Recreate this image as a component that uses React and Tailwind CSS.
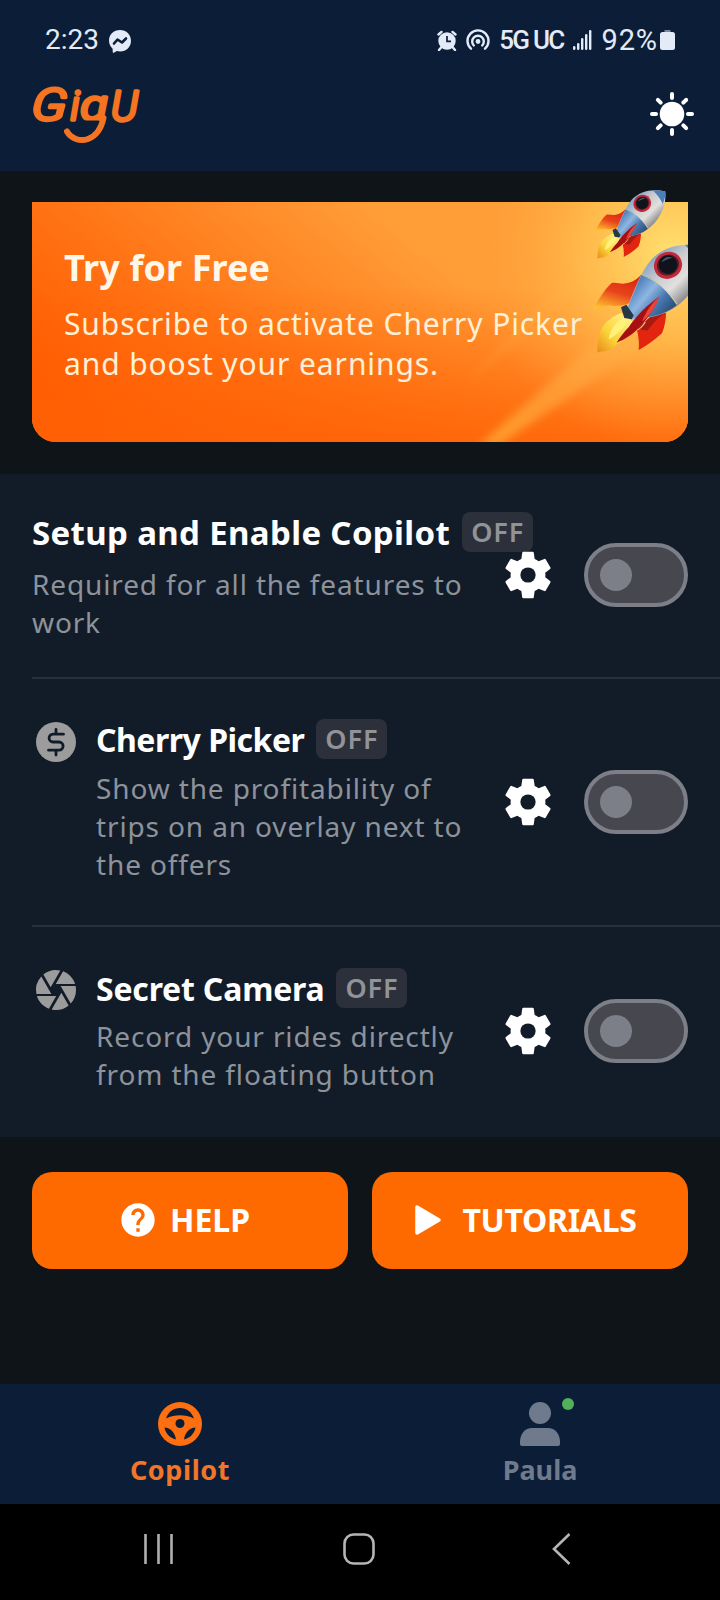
import { useState } from "react";
import { MdCamera, MdHelp } from "react-icons/md";
import clsx from "clsx";

function StatusBar() {
  return (
    <div className="flex h-20 items-center pl-[45px] pr-[45px] text-[#e3eaf8]">
      <span className="font-[Roboto] text-[28px] leading-8">2:23</span>
      <svg className="ml-[9px] mt-px" width="24" height="24" viewBox="0 0 24 24">
        <path
          fill="currentColor"
          d="M12 1C5.600 1 1 5.600 1 11.500c0 3.400 1.500 6.300 3.600 8.200l.2 3.700c.1.400.4.600.8.400l3.400-1.700c1 .2 2 .3 3 .3 6.400 0 11-4.600 11-10.700S18.400 1 12 1z"
        />
        <path
          d="M6 14.500l3.500-4 4.500 3 4-4"
          fill="none"
          stroke="#0c1e37"
          strokeWidth="2.600"
          strokeLinejoin="round"
          strokeLinecap="round"
        />
      </svg>
      <div className="ml-auto flex items-center">
        <svg width="20" height="21" viewBox="0 0 20 21" fill="none">
          <circle cx="10" cy="11" r="8.700" fill="currentColor" />
          <path
            d="M1.500 4.500l3-2.600M18.500 4.500l-3-2.600M4.500 17l-2.500 3M15.500 17l2.500 3"
            stroke="currentColor"
            strokeWidth="2.400"
            strokeLinecap="round"
          />
          <path d="M10 6v5.300h4" stroke="#0c1e37" strokeWidth="1.700" />
        </svg>
        <svg className="ml-[9px]" width="24" height="22" viewBox="0 0 24 22" fill="none">
          <g stroke="currentColor" strokeWidth="2.400" strokeLinecap="round">
            <path d="M5 19.700a10.500 10.500 0 1 1 14 0" />
            <path d="M7.800 16.500a5.800 5.800 0 1 1 8.400 0" />
          </g>
          <circle cx="12" cy="12.500" r="2.400" fill="currentColor" />
        </svg>
        <span className="ml-[9px] flex gap-[5px] font-[Roboto] text-[26px] font-medium leading-8 tracking-[-1.800px]">
          <span>5G</span>
          <span>UC</span>
        </span>
        <svg className="ml-[9px]" width="20" height="22" viewBox="0 0 20 22" fill="currentColor">
          <rect x="1" y="17" width="2.400" height="4" rx="1.200" />
          <rect x="5" y="14" width="2.400" height="7" rx="1.200" />
          <rect x="9" y="9" width="2.400" height="12" rx="1.200" />
          <rect x="13" y="5" width="2.400" height="16" rx="1.200" />
          <rect x="17" y="1" width="2.400" height="20" rx="1.200" />
        </svg>
        <span className="ml-[9px] font-[Roboto] text-[29px] leading-8 tracking-[0.900px]">92%</span>
        <svg className="ml-[2px]" width="15" height="22" viewBox="0 0 15 22">
          <path d="M4.500 1h6v3h-6z" fill="#7d899d" />
          <rect x="0" y="3" width="15" height="18" rx="2.500" fill="currentColor" />
        </svg>
      </div>
    </div>
  );
}

function Logo() {
  return (
    <svg className="-mt-4 overflow-visible" width="116" height="84" viewBox="0 -16 116 84" aria-label="GigU">
      <defs>
        <clipPath id="bowl">
          <path d="M40 0h50v40.500H40z" />
        </clipPath>
      </defs>
      <g
        fill="#f57421"
        stroke="#f57421"
        strokeWidth="3.600"
        strokeLinejoin="round"
        fontFamily="Roboto, sans-serif"
        fontStyle="italic"
        fontWeight="300"
      >
        <text transform="translate(-1 40) skewX(-4) scale(1.200 1)" fontSize="44">G</text>
        <text x="38.500" y="40" fontSize="41">i</text>
        <g clipPath="url(#bowl)">
          <text transform="translate(48.500 40) scale(1.200 1)" fontSize="42">g</text>
        </g>
        <text x="79" y="41" fontSize="42">U</text>
      </g>
      {/* Tail of the g doubles as a smile */}
      <path
        d="M35 51.500c4 7 13 10.500 21 7.500 8-3 13-9 15.500-21"
        fill="none"
        stroke="#f57421"
        strokeWidth="6"
        strokeLinecap="round"
      />
    </svg>
  );
}

function SunIcon() {
  return (
    <svg width="48" height="48" viewBox="0 0 48 48">
      <circle cx="24" cy="24" r="12.300" fill="#fff" />
      {[0, 45, 90, 135, 180, 225, 270, 315].map((angle) => (
        <path
          key={angle}
          d="M24 4v4"
          stroke="#fff"
          strokeWidth="4"
          strokeLinecap="round"
          transform={`rotate(${angle} 24 24)`}
        />
      ))}
    </svg>
  );
}

function Rocket() {
  return (
    <g>
      <path
        d="M185 398c-30 12-50 26-62 52-8 20-12 45-11 68 12-6 22-2 34-8 14-4 20-16 34-22 20-16 34-38 40-62z"
        fill="url(#flame)"
      />
      <path d="M192 412c-24 14-40 34-46 66 22-12 42-30 58-56z" fill="#fff27a" />
      <path
        d="M245 283c-20 22-36 26-55 28-12 0-24-4-35-2-22 20-40 50-57 82 24-10 40-18 60-13 18-1 36 0 57-13z"
        fill="url(#fin)"
      />
      <path d="M318 398c0 22-4 42-12 62-22 20-46 38-70 50 2-22 0-40-5-60l40-40z" fill="#e3240f" />
      <path d="M318 398c-26 14-40 34-56 54l-30-6 42-38z" fill="#a51a12" />
      <path
        d="M433 200c-60-14-118-4-158 38-34 40-56 100-75 152l16 26c70-2 120-16 165-66 34-40 58-90 52-150z"
        fill="url(#hull)"
      />
      <path
        d="M245 284c-16 34-30 70-45 106l16 26c50-2 96-10 134-40-8-16-60-86-105-92z"
        fill="url(#belly)"
      />
      <path d="M246 284c42 16 76 46 105 88" fill="none" stroke="#d8cf8f" strokeWidth="3" />
      <path d="M433 200c-22-6-40-7-58-5 18 18 34 38 46 62 10-18 14-38 12-57z" fill="#4a7fb8" />
      <ellipse cx="324" cy="256" rx="43" ry="40" fill="#c22a3a" transform="rotate(-30 324 256)" />
      <ellipse cx="324" cy="255" rx="34" ry="31" fill="#5b1a26" transform="rotate(-30 324 255)" />
      <circle cx="324" cy="254" r="28" fill="#10131b" />
      <path d="M304 247c6-14 20-20 34-14-12 2-24 8-34 14z" fill="#4d5668" />
      <path d="M183 382l16-8 22 32-6 12-22-4z" fill="#263844" />
      <path d="M298 350c-34 22-72 60-92 92-14 14-26 30-36 46 26-10 46-24 66-44 16-16 42-46 62-94z" fill="#a80f12" />
      <path d="M298 350c-22 18-40 44-52 74 20-12 40-40 52-74z" fill="#e8443a" />
      <path d="M232 450c12-6 18-14 24-24" stroke="#f6b878" strokeWidth="4" fill="none" />
    </g>
  );
}

function PromoBanner() {
  return (
    <section className="relative mx-8 mt-[31px] h-60 rounded-b-3xl bg-[#ff7a18] px-8 pt-11">
      {/* Art sits behind the copy; the small rocket pokes out of the top edge */}
      <svg
        className="absolute left-0 top-[-20px]"
        width="656"
        height="260"
        viewBox="0 0 656 260"
      >
        <defs>
          <linearGradient id="sky" gradientUnits="userSpaceOnUse" x1="110" y1="290" x2="330" y2="20">
            <stop offset="0" stopColor="#ff5a00" />
            <stop offset=".45" stopColor="#ff7516" />
            <stop offset="1" stopColor="#ff9d37" />
          </linearGradient>
          <radialGradient id="glow" gradientUnits="userSpaceOnUse" cx="640" cy="70" r="200">
            <stop offset="0" stopColor="#ffe070" />
            <stop offset=".45" stopColor="#ffc04f" stopOpacity=".8" />
            <stop offset="1" stopColor="#ffa038" stopOpacity="0" />
          </radialGradient>
          <linearGradient id="ground" x1="0" y1="0" x2="0" y2="1">
            <stop offset=".35" stopColor="#ff6206" stopOpacity="0" />
            <stop offset="1" stopColor="#ff6206" stopOpacity=".85" />
          </linearGradient>
          <linearGradient id="trail" x1="0" y1="1" x2="1" y2="0">
            <stop offset="0" stopColor="#ffa02f" stopOpacity=".9" />
            <stop offset="1" stopColor="#ffbc55" stopOpacity=".25" />
          </linearGradient>
          <linearGradient id="flame" x1="1" y1="0" x2="0" y2="1">
            <stop offset="0" stopColor="#fff6a0" />
            <stop offset=".6" stopColor="#fbd43a" />
            <stop offset="1" stopColor="#e98a18" />
          </linearGradient>
          <linearGradient id="fin" x1=".7" y1="0" x2=".3" y2="1">
            <stop offset="0" stopColor="#d92512" />
            <stop offset=".5" stopColor="#e8431a" />
            <stop offset="1" stopColor="#ffc22e" />
          </linearGradient>
          <linearGradient id="hull" x1=".25" y1=".2" x2=".8" y2=".75">
            <stop offset="0" stopColor="#7d9fc2" />
            <stop offset=".35" stopColor="#c9cbd0" />
            <stop offset=".65" stopColor="#e2e0de" />
            <stop offset="1" stopColor="#77787e" />
          </linearGradient>
          <linearGradient id="belly" x1=".1" y1=".2" x2=".9" y2=".8">
            <stop offset="0" stopColor="#3f74b4" />
            <stop offset=".4" stopColor="#8fb6e2" />
            <stop offset=".7" stopColor="#4877ad" />
            <stop offset="1" stopColor="#2c4f7c" />
          </linearGradient>
          <clipPath id="card">
            <path d="M0 20H656V236a24 24 0 0 1-24 24H24a24 24 0 0 1-24-24z" />
          </clipPath>
          <filter id="soft" x="-10%" y="-10%" width="120%" height="120%">
            <feGaussianBlur stdDeviation="4" />
          </filter>
        </defs>
        <g clipPath="url(#card)">
          <rect y="20" width="656" height="240" fill="url(#sky)" />
          <rect y="20" width="656" height="240" fill="url(#ground)" />
          <rect y="20" width="656" height="240" fill="url(#glow)" />
          <path d="M446 264L575 150L610 165L466 264z" fill="url(#trail)" filter="url(#soft)" />
          <path d="M430 205L560 70L575 85z" fill="url(#trail)" opacity=".5" filter="url(#soft)" />
          {/* Rockets are drawn at three times their size */}
          <g transform="translate(528 -2) scale(.3333)">
            <Rocket />
          </g>
        </g>
        <g transform="translate(541.900 -32.600) scale(.211)">
          <Rocket />
        </g>
      </svg>
      <div className="relative text-[#fff8ea]">
        <h2 className="text-[36px] font-bold leading-[44px] tracking-[0.100px]">Try for Free</h2>
        <p className="mt-[14px] whitespace-nowrap text-[30px] leading-10 tracking-[0.900px] text-[#fff0d8]">
          Subscribe to activate Cherry Picker
          <br />
          and boost your earnings.
        </p>
      </div>
    </section>
  );
}

function GearIcon() {
  return (
    <svg width="58" height="58" viewBox="0 0 24 24">
      <path
        fill="#fff"
        d="M19.140 12.940c.04-.3.06-.61.06-.94 0-.32-.02-.64-.07-.94l2.030-1.580c.18-.14.23-.41.12-.61l-1.920-3.320c-.12-.22-.37-.29-.59-.22l-2.390.96c-.5-.38-1.030-.7-1.620-.94l-.36-2.540c-.04-.24-.24-.41-.48-.41h-3.840c-.24 0-.43.17-.47.41l-.36 2.540c-.59.24-1.130.57-1.620.94l-2.390-.96c-.22-.08-.47 0-.59.22L2.740 8.870c-.12.21-.08.47.12.61l2.030 1.580c-.05.3-.09.63-.09.94s.02.64.07.94l-2.030 1.580c-.18.14-.23.41-.12.61l1.920 3.320c.12.22.37.29.59.22l2.390-.96c.5.38 1.030.7 1.620.94l.36 2.540c.05.24.24.41.48.41h3.840c.24 0 .44-.17.47-.41l.36-2.540c.59-.24 1.130-.56 1.620-.94l2.390.96c.22.08.47 0 .59-.22l1.920-3.320c.12-.22.07-.47-.12-.61l-2.010-1.580z"
      />
      <circle cx="12" cy="12" r="3.150" fill="#121c28" />
    </svg>
  );
}

function DollarIcon() {
  return (
    <svg width="40" height="40" viewBox="0 0 40 40">
      <circle cx="20" cy="20" r="20" fill="#9c9c9d" />
      <path
        d="M20 7.500v4.500M20 28.500v4.500M27.500 12.200H17a3.900 3.900 0 0 0 0 7.800h6a4.100 4.100 0 0 1 0 8.200H12.500"
        fill="none"
        stroke="#121c28"
        strokeWidth="2.800"
        strokeLinecap="round"
      />
    </svg>
  );
}

function Toggle({ on, onChange }) {
  return (
    <button
      role="switch"
      aria-checked={on}
      onClick={() => onChange(!on)}
      className={clsx(
        "flex h-16 w-[104px] shrink-0 items-center rounded-full border-4 border-[#7d7f88] bg-[#46474f] px-3",
        on && "justify-end",
      )}
    >
      <span className="size-8 rounded-full bg-[#7d7f88]" />
    </button>
  );
}

function FeatureRow({ icon, title, titleClass, lines, className, bodyClass, controlsClass }) {
  const [on, setOn] = useState(false);
  return (
    <div className={clsx("ml-8 flex", className)}>
      {icon && <div className="flex w-16 shrink-0 pl-1 pt-[3px]">{icon}</div>}
      <div className="min-w-0 flex-1 whitespace-nowrap">
        <div className="flex h-10 items-center gap-3">
          <h3 className={clsx("pt-px font-bold leading-10 text-white", titleClass)}>{title}</h3>
          <span className="flex h-10 w-[71px] shrink-0 items-center justify-center rounded-lg bg-[#2b303a] text-[27px] font-semibold tracking-[0.900px] text-[#929398]">
            {on ? "ON" : "OFF"}
          </span>
        </div>
        <p className={clsx("text-[28px] leading-[38px] tracking-[0.870px] text-[#8d929b]", bodyClass)}>
          {lines.map((line) => (
            <span className="block" key={line}>
              {line}
            </span>
          ))}
        </p>
      </div>
      <div className={clsx("flex shrink-0 items-center gap-[27px] self-center pr-8", controlsClass)}>
        <GearIcon />
        <Toggle on={on} onChange={setOn} />
      </div>
    </div>
  );
}

function SteeringWheelIcon() {
  return (
    <svg width="44" height="44" viewBox="0 0 44 44">
      <circle cx="22" cy="22" r="22" fill="#fd6f10" />
      <g fill="#0c1e37">
        <path d="M8 16.500C10.500 9.500 15.500 6 22 6s11.500 3.500 14 10.500c-9-4.200-19-4.200-28 0z" />
        <circle cx="22" cy="21.500" r="4.500" />
        <path d="M6.500 25.500c6 0 10.500 5 11.500 12-6-1.500-10.500-6-11.500-12zM37.500 25.500c-6 0-10.500 5-11.500 12 6-1.500 10.500-6 11.500-12z" />
      </g>
    </svg>
  );
}

function TabBar() {
  return (
    <nav className="flex h-[120px] bg-[#0c1e37] text-[27px] font-bold leading-9">
      <button className="flex flex-1 flex-col items-center pt-[18px] text-[#f2762a]">
        <SteeringWheelIcon />
        <span className="mt-[6px] tracking-[0.600px]">Copilot</span>
      </button>
      <button className="flex flex-1 flex-col items-center pt-[18px] text-[#6f7b8d]">
        <span className="relative">
          <svg width="44" height="44" viewBox="0 0 44 44" fill="currentColor">
            <circle cx="22" cy="11" r="11" />
            <path d="M2 42v-2c0-8 5-14 12-14h16c7 0 12 6 12 14v2a2 2 0 0 1-2 2H4a2 2 0 0 1-2-2z" />
          </svg>
          <span className="absolute -right-3 -top-1 size-3 rounded-full bg-[#52b158]" />
        </span>
        <span className="mt-[6px]">Paula</span>
      </button>
    </nav>
  );
}

function SystemNav() {
  return (
    <div className="flex h-24 items-center justify-between bg-black pb-[6px] pl-[143px] pr-[149px]">
      <svg width="31" height="32" viewBox="0 0 31 32" stroke="#b0b0b0" strokeWidth="2.600">
        <path d="M2.500 1v30M15.500 1v30M28.500 1v30" />
      </svg>
      <svg
        className="-ml-2"
        width="32"
        height="32"
        viewBox="0 0 32 32"
        fill="none"
        stroke="#b5b5b5"
        strokeWidth="2.600"
      >
        <rect x="1.500" y="1.500" width="29" height="29" rx="9" />
      </svg>
      <svg width="19" height="32" viewBox="0 0 19 32" fill="none" stroke="#b5b5b5" strokeWidth="2.600">
        <path d="M17.500 1L2 16l15.500 15" />
      </svg>
    </div>
  );
}

export default function App() {
  return (
    <div className="flex h-[1600px] w-[720px] flex-col overflow-hidden bg-[#0e1418] font-['Noto_Sans',sans-serif]">
      <header className="h-[171px] bg-[#0c1e37]">
        <StatusBar />
        <div className="flex items-start justify-between pl-8 pr-6">
          <Logo />
          <div className="pt-[10px]">
            <SunIcon />
          </div>
        </div>
      </header>
      <PromoBanner />
      <main className="mt-8 h-[663px] bg-[#121c28]">
        <FeatureRow
          title="Setup and Enable Copilot"
          titleClass="text-[33px] tracking-[0.350px]"
          lines={["Required for all the features to", "work"]}
          className="h-[203px] pt-[38px]"
          bodyClass="mt-[13px]"
          controlsClass="-mt-10"
        />
        <div className="ml-8 h-0.5 bg-[#27313e]" />
        <FeatureRow
          icon={<DollarIcon />}
          title="Cherry Picker"
          titleClass="text-[32px] tracking-[-0.500px]"
          lines={["Show the profitability of", "trips on an overlay next to", "the offers"]}
          className="h-[246px] pt-10"
          bodyClass="mt-[10px]"
          controlsClass="-mt-10"
        />
        <div className="ml-8 h-0.5 bg-[#27313e]" />
        <FeatureRow
          icon={<MdCamera size={48} color="#9c9c9d" className="-ml-1 -mt-[5px] shrink-0" />}
          title="Secret Camera"
          titleClass="text-[32px] tracking-[-0.200px]"
          lines={["Record your rides directly", "from the floating button"]}
          className="h-[210px] pt-[41px]"
          bodyClass="mt-[9px]"
          controlsClass="-mt-[43px]"
        />
      </main>
      <div className="mt-[35px] flex justify-between px-8 text-[32px] font-bold text-white">
        <button className="flex h-[97px] w-[316px] items-center justify-center gap-3 rounded-[20px] bg-[#ff6a00] pb-0.5 pr-3">
          <MdHelp size={40} />
          HELP
        </button>
        <button className="flex h-[97px] w-[316px] items-center justify-center gap-5 rounded-[20px] bg-[#ff6a00] pb-0.5 pr-2 tracking-[-0.300px]">
          <svg width="27" height="32" viewBox="0 0 27 32">
            <path
              d="M2 3v26l22-13z"
              fill="currentColor"
              stroke="currentColor"
              strokeWidth="3.500"
              strokeLinejoin="round"
            />
          </svg>
          TUTORIALS
        </button>
      </div>
      <div className="mt-auto">
        <TabBar />
        <SystemNav />
      </div>
    </div>
  );
}
